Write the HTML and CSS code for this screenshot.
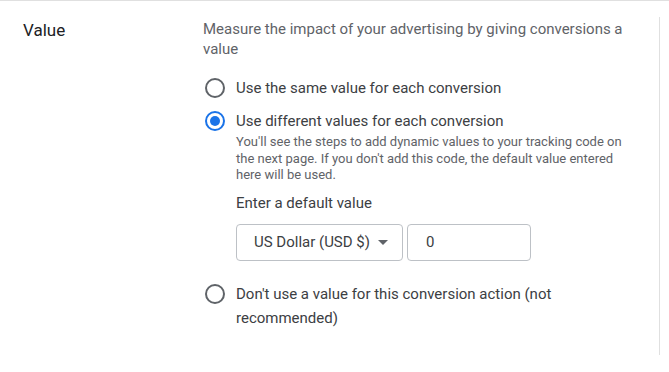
FILE: index.html
```html
<!DOCTYPE html>
<html lang="en">
<head>
  <meta charset="UTF-8">
  <title>Value</title>
  <link rel="stylesheet" href="styles.css">
</head>
<body>
  <div class="section">
    <div class="section-title">Value</div>
    <div class="section-body">
      <p class="description">Measure the impact of your advertising by giving conversions a value</p>

      <div class="options">
        <label class="option">
          <span class="radio"></span>
          <span class="option-label">Use the same value for each conversion</span>
        </label>

        <label class="option">
          <span class="radio checked"></span>
          <span class="option-text">
            <span class="option-label">Use different values for each conversion</span>
            <span class="hint">You'll see the steps to add dynamic values to your tracking code on the next page. If you don't add this code, the default value entered here will be used.</span>
          </span>
        </label>

        <div class="default-value">
          <div class="field-label">Enter a default value</div>
          <div class="fields">
            <div class="select">
              <span>US Dollar (USD $)</span>
              <span class="arrow"></span>
            </div>
            <div class="input">0</div>
          </div>
        </div>

        <label class="option wrap">
          <span class="radio"></span>
          <span class="option-label">Don't use a value for this conversion action (not recommended)</span>
        </label>
      </div>
    </div>
  </div>
</body>
</html>
```

FILE: styles.css
```css
body {
  margin: 0;
  font-family: Roboto, "Liberation Sans", Arial, sans-serif;
  background-color: #ffffff;
  color: #3c4043;
}

.section {
  display: flex;
  border-top: 1px solid #e0e0e0;
  height: 371px;
  box-sizing: border-box;
}

.section-title {
  width: 180px;
  padding: 19px 0 0 23px;
  font-size: 17px;
  color: #202124;
}

.section-body {
  width: 456px;
  border-right: 1px solid #e0e0e0;
  margin: 16px 0 16px 0;
  padding-top: 2px;
}

.description {
  margin: 0;
  font-size: 15px;
  line-height: 20px;
  color: #5f6368;
  width: 430px;
}

.options {
  margin-top: 19px;
}

.option {
  display: flex;
  align-items: flex-start;
  font-size: 15px;
  color: #3c4043;
}

.option + .option {
  margin-top: 13px;
}

.radio {
  width: 16px;
  height: 16px;
  border: 2px solid #5f6368;
  border-radius: 50%;
  margin: 0 11px 0 2px;
  flex-shrink: 0;
  position: relative;
}

.radio.checked {
  border-color: #1a73e8;
}

.radio.checked::after {
  content: "";
  position: absolute;
  top: 3px;
  left: 3px;
  width: 10px;
  height: 10px;
  border-radius: 50%;
  background-color: #1a73e8;
}

.option-label {
  line-height: 20px;
}

.option-text {
  display: flex;
  flex-direction: column;
}

.hint {
  font-size: 13px;
  line-height: 16.5px;
  color: #5f6368;
  width: 396px;
  margin-top: 3px;
}

.default-value {
  margin: 9px 0 0 33px;
}

.field-label {
  font-size: 15px;
  line-height: 20px;
}

.fields {
  display: flex;
  gap: 4px;
  margin-top: 11px;
}

.select, .input {
  height: 37px;
  box-sizing: border-box;
  border: 1px solid #bdc1c6;
  border-radius: 4px;
  display: flex;
  align-items: center;
  font-size: 15px;
  color: #3c4043;
}

.select {
  width: 167px;
  padding: 0 0 0 17px;
}

.arrow {
  margin-left: 8px;
  border-left: 5px solid transparent;
  border-right: 5px solid transparent;
  border-top: 5px solid #5f6368;
}

.input {
  width: 124px;
  padding-left: 18px;
}

.option.wrap {
  margin-top: 21px;
}

.option.wrap .option-label {
  line-height: 24px;
  width: 330px;
}

.option.wrap .radio {
  margin-top: 2px;
}
```
